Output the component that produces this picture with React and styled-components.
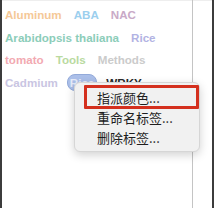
import React from 'react';
import styled, { createGlobalStyle } from 'styled-components';

const GlobalStyle = createGlobalStyle`
  html, body {
    margin: 0;
    padding: 0;
    background: #ffffff;
  }
  body {
    font-family: "Liberation Sans", Arial, sans-serif;
  }
`;

const tags = [
  { name: 'Aluminum', color: '#f5c897' },
  { name: 'ABA', color: '#9ccfee' },
  { name: 'NAC', color: '#c9aac7' },
  { name: 'Arabidopsis thaliana', color: '#8ccdb9' },
  { name: 'Rice', color: '#b2b3e3' },
  { name: 'tomato', color: '#f2a9b1' },
  { name: 'Tools', color: '#b9da9f' },
  { name: 'Methods', color: '#cbcbcb' },
  { name: 'Cadmium', color: '#c9c5e2' },
  { name: 'Rice', color: '#e6ebf8', selected: true },
  { name: 'WRKY', color: '#2a2a2a' },
];

const menuItems = ['指派颜色...', '重命名标签...', '删除标签...'];

function App() {
  return (
    <>
      <GlobalStyle />
      <Window>
        <Edge />
        <Panel>
          <TagCloud>
            {tags.map((t, i) => (
              <Tag key={i} $color={t.color} $selected={t.selected}>
                {t.name}
              </Tag>
            ))}
          </TagCloud>
          <Menu>
            {menuItems.map((label, i) => (
              <MenuItem key={label} $marked={i === 0}>
                {label}
              </MenuItem>
            ))}
          </Menu>
        </Panel>
        <Divider />
        <SidePane />
        <Edge />
      </Window>
    </>
  );
}

export default App;

const Window = styled.div`
  width: 214px;
  height: 208px;
  display: flex;
  overflow: hidden;
  background: #ffffff;
`;

const Edge = styled.div`
  width: 2px;
  flex: none;
  background: #3c3c3c;
`;

const Panel = styled.div`
  position: relative;
  width: 190px;
  flex: none;
  border-top: 1px solid #eeeeee;
  box-sizing: border-box;
`;

const TagCloud = styled.div`
  display: flex;
  flex-wrap: wrap;
  align-content: flex-start;
  column-gap: 6px;
  row-gap: 7.6px;
  padding: 6px 0 0 0;
`;

const Tag = styled.span`
  display: inline-block;
  height: 15px;
  line-height: 15px;
  padding: 0 ${(p) => (p.$selected ? '2px' : '3px')};
  font-size: 11.6px;
  font-weight: bold;
  color: ${(p) => p.$color};
  border-radius: 8px;
  border: ${(p) => (p.$selected ? '1px solid #93aad9' : 'none')};
  margin-top: ${(p) => (p.$selected ? '-1px' : '0')};
  margin-bottom: ${(p) => (p.$selected ? '-1px' : '0')};
  background: ${(p) => (p.$selected ? '#abbfe9' : 'transparent')};
  white-space: nowrap;
`;

const Menu = styled.div`
  position: absolute;
  left: 72px;
  top: 81px;
  width: 124px;
  padding: 5px 0 3px;
  background: #f1f1f1;
  border: 1px solid #d6d6d6;
  border-radius: 6px;
  box-shadow: 0 3px 10px rgba(0, 0, 0, 0.18);
  font-family: "Noto Sans CJK SC", "Liberation Sans", sans-serif;
`;

const MenuItem = styled.div`
  position: relative;
  height: 20px;
  line-height: 20px;
  padding-left: 22px;
  font-size: 13px;
  color: #1e1e1e;

  &::after {
    content: '';
    display: ${(p) => (p.$marked ? 'block' : 'none')};
    position: absolute;
    left: 9px;
    right: 0;
    top: -3px;
    bottom: -1px;
    border: 3px solid #d4301e;
    border-radius: 1px;
  }
`;

const Divider = styled.div`
  width: 1px;
  flex: none;
  background: #c4c4c4;
`;

const SidePane = styled.div`
  flex: 1;
  border-top: 1px solid #eeeeee;
`;
